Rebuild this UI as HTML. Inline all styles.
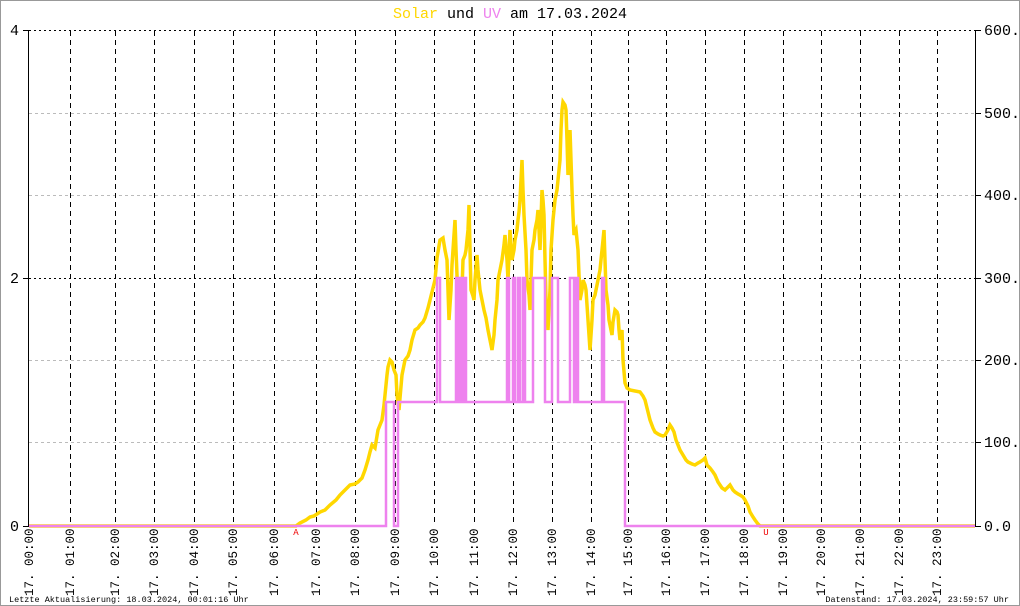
<!DOCTYPE html>
<html><head><meta charset="utf-8"><style>
html,body{margin:0;padding:0;background:#fff}
svg{display:block}
text{font-family:"Liberation Mono",monospace}
</style></head><body>
<svg width="1020" height="606" viewBox="0 0 1020 606" xmlns="http://www.w3.org/2000/svg">
<rect x="0.5" y="0.5" width="1019" height="605" fill="#fff" stroke="#999"/>
<text x="510" y="18" font-size="15" text-anchor="middle"><tspan fill="#ffd700">Solar</tspan><tspan fill="#000"> und </tspan><tspan fill="#ee82ee">UV</tspan><tspan fill="#000"> am 17.03.2024</tspan></text>
<g stroke="#bbb" stroke-dasharray="3,3" stroke-width="1">
<line x1="29" y1="113.5" x2="975" y2="113.5"/><line x1="29" y1="195.5" x2="975" y2="195.5"/>
<line x1="29" y1="360.5" x2="975" y2="360.5"/><line x1="29" y1="442.5" x2="975" y2="442.5"/>
</g>
<g stroke="#000" stroke-dasharray="2,3" stroke-width="1">
<line x1="29" y1="30.5" x2="975" y2="30.5"/><line x1="29" y1="278.5" x2="975" y2="278.5"/>
</g>
<g stroke="#000" stroke-dasharray="5,4" stroke-width="1">
<line x1="70.5" y1="31" x2="70.5" y2="526"/><line x1="115.5" y1="31" x2="115.5" y2="526"/><line x1="154.5" y1="31" x2="154.5" y2="526"/><line x1="194.5" y1="31" x2="194.5" y2="526"/><line x1="233.5" y1="31" x2="233.5" y2="526"/><line x1="274.5" y1="31" x2="274.5" y2="526"/><line x1="316.5" y1="31" x2="316.5" y2="526"/><line x1="355.5" y1="31" x2="355.5" y2="526"/><line x1="395.5" y1="31" x2="395.5" y2="526"/><line x1="434.5" y1="31" x2="434.5" y2="526"/><line x1="474.5" y1="31" x2="474.5" y2="526"/><line x1="513.5" y1="31" x2="513.5" y2="526"/><line x1="552.5" y1="31" x2="552.5" y2="526"/><line x1="591.5" y1="31" x2="591.5" y2="526"/><line x1="628.5" y1="31" x2="628.5" y2="526"/><line x1="666.5" y1="31" x2="666.5" y2="526"/><line x1="705.5" y1="31" x2="705.5" y2="526"/><line x1="744.5" y1="31" x2="744.5" y2="526"/><line x1="783.5" y1="31" x2="783.5" y2="526"/><line x1="821.5" y1="31" x2="821.5" y2="526"/><line x1="860.5" y1="31" x2="860.5" y2="526"/><line x1="899.5" y1="31" x2="899.5" y2="526"/><line x1="937.5" y1="31" x2="937.5" y2="526"/>
</g>
<g stroke="#000" stroke-width="1">
<line x1="28.5" y1="30" x2="28.5" y2="526"/><line x1="975.5" y1="30" x2="975.5" y2="526"/>
<line x1="23" y1="30.5" x2="29" y2="30.5"/><line x1="23" y1="278.5" x2="29" y2="278.5"/><line x1="23" y1="526.5" x2="29" y2="526.5"/>
<line x1="975" y1="30.5" x2="981" y2="30.5"/><line x1="975" y1="113.5" x2="981" y2="113.5"/><line x1="975" y1="195.5" x2="981" y2="195.5"/><line x1="975" y1="278.5" x2="981" y2="278.5"/><line x1="975" y1="360.5" x2="981" y2="360.5"/><line x1="975" y1="442.5" x2="981" y2="442.5"/><line x1="975" y1="526.5" x2="981" y2="526.5"/>
</g>
<g font-size="15" fill="#000" text-anchor="end">
<text x="19" y="35">4</text><text x="19" y="283">2</text><text x="19" y="531">0</text>
</g>
<g font-size="15" fill="#000">
<text x="984" y="35">600.0</text><text x="984" y="118">500.0</text><text x="984" y="200">400.0</text><text x="984" y="283">300.0</text><text x="984" y="365">200.0</text><text x="984" y="447">100.0</text><text x="984" y="531">0.0</text>
</g>
<polyline fill="none" stroke="#ffd700" stroke-width="3.5" stroke-linejoin="miter" points="29,526 296,526 300,523 306,520 310,517 314,516 320,512 325,510 330,505 336,500 340,495 345,490 350,485 355,484 358,482 362,478 365,470 368,460 370,452 372,445 375,448 378,430 380,425 382,420 384,405 385,395 387,375 388,367 390,360 392,362 394,370 396,375 397,395 399,410 400,398 402,375 404,365 405,360 408,356 410,350 412,340 415,330 418,328 420,325 423,322 425,318 428,308 430,300 432,292 435,280 437,258 440,240 443,238 445,250 447,260 448,290 449,320 451,290 452,265 454,235 455,220 456,250 458,300 460,320 461,330 462,290 463,260 465,255 466,250 468,230 469,205 470,250 471,290 473,296 474,300 475,280 477,255 478,270 480,290 482,300 484,310 486,318 488,330 490,340 492,350 494,335 495,320 497,300 498,280 500,270 502,260 504,245 505,235 507,260 508,280 509,255 510,230 511,245 512,260 514,250 515,240 517,230 518,220 519,212 520,200 521,180 522,160 523,190 524,215 526,250 527,280 529,295 530,310 531,280 532,250 534,240 535,230 537,220 538,210 539,230 540,250 541,220 542,190 543,200 544,215 545,260 546,300 547,315 548,330 550,290 551,250 552,235 553,220 554,210 555,200 557,190 558,180 559,170 560,160 561,130 562,110 563,102 565,105 566,110 567,140 568,175 569,150 570,130 571,160 572,190 573,215 574,235 575,232 576,230 577,240 578,250 579,275 580,300 582,290 583,280 585,285 586,290 587,305 588,320 589,335 590,350 592,320 593,300 595,295 596,290 597,285 598,280 599,275 600,270 601,260 602,250 603,240 604,230 605,260 606,290 608,305 609,320 611,330 612,335 613,322 615,310 617,312 618,315 619,330 620,340 621,335 622,330 623,360 625,383 627,388 630,390 635,391 640,392 643,396 645,400 648,412 650,420 653,428 655,432 658,434 660,435 663,436 665,435 668,430 670,425 672,428 674,432 676,440 678,445 680,450 683,455 686,460 688,462 692,464 695,465 698,463 700,462 703,460 705,458 707,465 710,468 713,472 715,475 718,482 720,485 722,488 725,490 728,487 730,485 733,490 735,492 738,494 740,495 743,497 745,500 748,506 750,512 753,517 755,520 758,524 760,526 975,526"/>
<polyline fill="none" stroke="#ee82ee" stroke-width="2.5" points="29,526 386,526 386,402 394,402 394,526 398,526 398,402 437,402 437,278 440,278 440,402 456,402 456,278 458,278 458,402 460,402 460,278 462,278 462,402 464,402 464,278 466,278 466,402 507,402 507,278 509,278 509,402 513,402 513,278 515,278 515,402 518,402 518,278 520,278 520,402 523,402 523,278 525,278 525,402 533,402 533,278 545,278 545,402 552,402 552,278 558,278 558,402 570,402 570,278 574,278 574,402 576,402 576,278 578,278 578,402 602,402 602,278 604,278 604,402 625,402 625,526 975,526"/>
<text x="296" y="535" font-size="9" fill="#e00" text-anchor="middle">A</text>
<text x="766" y="535" font-size="9" fill="#e00" text-anchor="middle">U</text>
<g font-size="12.5" fill="#000">
<text transform="translate(33,596) rotate(-90)">17. 00:00</text>
<text transform="translate(74,596) rotate(-90)">17. 01:00</text>
<text transform="translate(119,596) rotate(-90)">17. 02:00</text>
<text transform="translate(158,596) rotate(-90)">17. 03:00</text>
<text transform="translate(198,596) rotate(-90)">17. 04:00</text>
<text transform="translate(237,596) rotate(-90)">17. 05:00</text>
<text transform="translate(278,596) rotate(-90)">17. 06:00</text>
<text transform="translate(320,596) rotate(-90)">17. 07:00</text>
<text transform="translate(359,596) rotate(-90)">17. 08:00</text>
<text transform="translate(399,596) rotate(-90)">17. 09:00</text>
<text transform="translate(438,596) rotate(-90)">17. 10:00</text>
<text transform="translate(478,596) rotate(-90)">17. 11:00</text>
<text transform="translate(517,596) rotate(-90)">17. 12:00</text>
<text transform="translate(556,596) rotate(-90)">17. 13:00</text>
<text transform="translate(595,596) rotate(-90)">17. 14:00</text>
<text transform="translate(632,596) rotate(-90)">17. 15:00</text>
<text transform="translate(670,596) rotate(-90)">17. 16:00</text>
<text transform="translate(709,596) rotate(-90)">17. 17:00</text>
<text transform="translate(748,596) rotate(-90)">17. 18:00</text>
<text transform="translate(787,596) rotate(-90)">17. 19:00</text>
<text transform="translate(825,596) rotate(-90)">17. 20:00</text>
<text transform="translate(864,596) rotate(-90)">17. 21:00</text>
<text transform="translate(903,596) rotate(-90)">17. 22:00</text>
<text transform="translate(941,596) rotate(-90)">17. 23:00</text>
</g>
<text x="9" y="602" font-size="8.5" fill="#000">Letzte Aktualisierung: 18.03.2024, 00:01:16 Uhr</text>
<text x="1009" y="602" font-size="8.5" fill="#000" text-anchor="end">Datenstand: 17.03.2024, 23:59:57 Uhr</text>
</svg>
</body></html>
